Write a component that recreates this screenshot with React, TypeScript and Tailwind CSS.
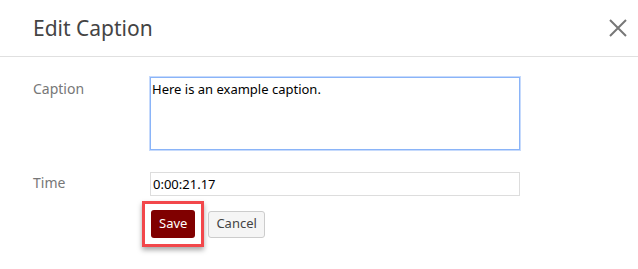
import { useState } from "react";

function CloseIcon() {
  return (
    <svg width="20" height="20" viewBox="0 0 20 20" className="text-[#777]">
      <path d="M2 2 L18 18 M18 2 L2 18" stroke="currentColor" strokeWidth="2" fill="none" />
    </svg>
  );
}

export default function App() {
  const [caption, setCaption] = useState("Here is an example caption.");
  const [time, setTime] = useState("0:00:21.17");

  return (
    <div className="h-[269px] w-[638px] bg-white font-['Noto_Sans',sans-serif]">
      <div className="flex h-[57px] items-center justify-between border-b border-[#e0e0e0] pl-[33px] pr-[10px]">
        <h1 className="text-[21px] leading-none text-[#444]">Edit Caption</h1>
        <button className="flex h-[20px] w-[20px] items-center justify-center">
          <CloseIcon />
        </button>
      </div>

      <div className="grid grid-cols-[117px_370px] gap-y-[21px] pl-[33px] pt-[20px]">
        <label className="pt-[1px] text-[14px] text-[#777]">Caption</label>
        <textarea
          value={caption}
          onChange={(e) => setCaption(e.target.value)}
          className="h-[73px] resize-none border border-[#8ab4f8] px-[1px] py-[2px] text-[13px] leading-[18px] text-black shadow-[0_0_0_1px_#c6dafc] outline-none"
        />

        <label className="pt-[1px] text-[14px] text-[#777]">Time</label>
        <div>
          <input
            value={time}
            onChange={(e) => setTime(e.target.value)}
            className="h-[24px] w-full border border-[#ddd] px-[2px] text-[13px] text-black outline-none"
          />
          <div className="mt-[5px] flex items-center gap-[4px]">
            <div className="-ml-[8px] border-[3px] border-[#f2474b] p-[6px] shadow-[0_3px_5px_rgba(0,0,0,0.35)]">
              <button className="h-[28px] rounded-[3px] bg-[#800000] px-[8px] text-[13px] text-white">Save</button>
            </div>
            <button className="h-[27px] rounded-[3px] border border-[#ccc] bg-[#f5f5f5] px-[7px] text-[13px] text-[#444]">
              Cancel
            </button>
          </div>
        </div>
      </div>
    </div>
  );
}
